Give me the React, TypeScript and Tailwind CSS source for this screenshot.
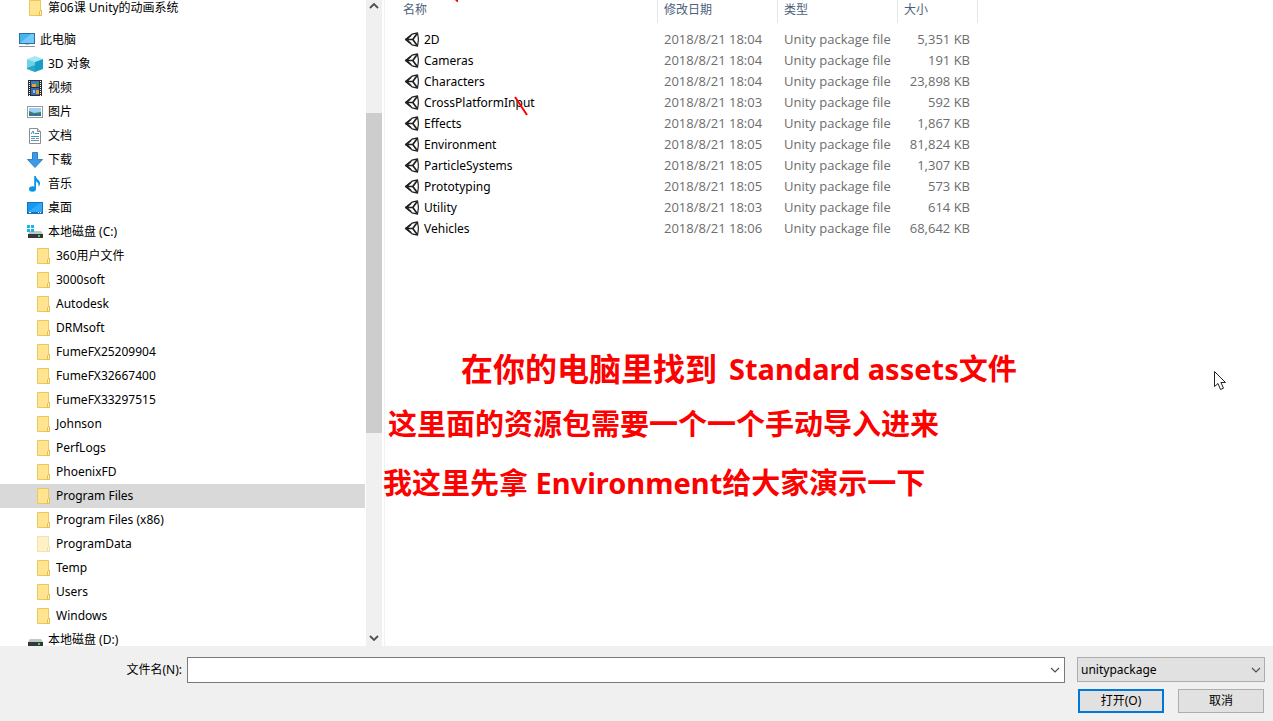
import React from "react";

type IconName = "folder" | "faded" | "pc" | "cube" | "video" | "image" | "doc" | "down" | "music" | "desktop" | "driveC" | "drive";
type Item = { label: string; icon: IconName; level: 0 | 1 | 2; selected?: boolean };

const items: Item[] = [
  { label: "此电脑", icon: "pc", level: 0 },
  { label: "3D 对象", icon: "cube", level: 1 },
  { label: "视频", icon: "video", level: 1 },
  { label: "图片", icon: "image", level: 1 },
  { label: "文档", icon: "doc", level: 1 },
  { label: "下载", icon: "down", level: 1 },
  { label: "音乐", icon: "music", level: 1 },
  { label: "桌面", icon: "desktop", level: 1 },
  { label: "本地磁盘 (C:)", icon: "driveC", level: 1 },
  { label: "360用户文件", icon: "folder", level: 2 },
  { label: "3000soft", icon: "folder", level: 2 },
  { label: "Autodesk", icon: "folder", level: 2 },
  { label: "DRMsoft", icon: "folder", level: 2 },
  { label: "FumeFX25209904", icon: "folder", level: 2 },
  { label: "FumeFX32667400", icon: "folder", level: 2 },
  { label: "FumeFX33297515", icon: "folder", level: 2 },
  { label: "Johnson", icon: "folder", level: 2 },
  { label: "PerfLogs", icon: "folder", level: 2 },
  { label: "PhoenixFD", icon: "folder", level: 2 },
  { label: "Program Files", icon: "folder", level: 2, selected: true },
  { label: "Program Files (x86)", icon: "folder", level: 2 },
  { label: "ProgramData", icon: "faded", level: 2 },
  { label: "Temp", icon: "folder", level: 2 },
  { label: "Users", icon: "folder", level: 2 },
  { label: "Windows", icon: "folder", level: 2 },
  { label: "本地磁盘 (D:)", icon: "drive", level: 1 },
];

const files = [
  ["2D", "2018/8/21 18:04", "5,351 KB"],
  ["Cameras", "2018/8/21 18:04", "191 KB"],
  ["Characters", "2018/8/21 18:04", "23,898 KB"],
  ["CrossPlatformInput", "2018/8/21 18:03", "592 KB"],
  ["Effects", "2018/8/21 18:04", "1,867 KB"],
  ["Environment", "2018/8/21 18:05", "81,824 KB"],
  ["ParticleSystems", "2018/8/21 18:05", "1,307 KB"],
  ["Prototyping", "2018/8/21 18:05", "573 KB"],
  ["Utility", "2018/8/21 18:03", "614 KB"],
  ["Vehicles", "2018/8/21 18:06", "68,642 KB"],
];

const indents = ["pl-[19px]", "pl-[27px]", "pl-[35px]"];

function Drive() {
  return (
    <>
      <path d="M3 7h11l2 3H1z" fill="#c3c6c8" />
      <rect x="1" y="10" width="15" height="4" fill="#35383a" />
      <rect x="11" y="11" width="2" height="2" fill="#35e04a" />
    </>
  );
}

function TreeIcon({ name }: { name: IconName }) {
  return (
    <svg viewBox="0 0 16 16" className="size-4 shrink-0" aria-hidden="true">
      {(name === "folder" || name === "faded") && (
        <g opacity={name === "faded" ? 0.5 : 1}>
          <path d="M2.5.5h11v10h1v5h-12z" fill="#ffe590" stroke="#edc75a" />
          <path d="M12.5 15.5v-4l1-1h1v5z" fill="#fff0b5" stroke="#e6bd48" />
        </g>
      )}
      {name === "pc" && (
        <>
          <rect x=".5" y="1.5" width="15" height="10" fill="#45b4f4" stroke="#2d6f9f" />
          <path d="M1 11 12 2h3v9z" fill="#73cafa" />
          <path d="M6 12h4v1H6z" fill="#b8c7d0" />
          <path d="M0 14.5h16" stroke="#8496a3" />
        </>
      )}
      {name === "cube" && (
        <>
          <path d="M8 0 16 3 8 6 0 3z" fill="#a8e8f2" />
          <path d="M0 3 8 6v10l-8-3z" fill="#6ad3e6" />
          <path d="M16 3 8 6v10l8-3z" fill="#159fc4" />
          <path d="M0 12 8 9v7l-8-3z" fill="#1593b6" opacity=".7" />
        </>
      )}
      {name === "video" && (
        <>
          <rect x="1" width="14" height="16" fill="#2c2e31" />
          <path d="M2.5 1v15M13.5 1v15" stroke="#fff" strokeDasharray="1 1" />
          <rect x="4" y="1" width="8" height="6" fill="#3b78c7" />
          <rect x="4" y="8" width="8" height="7" fill="#3268b4" />
          <path d="M5 4h4v3H5zM9 10h3v4H9z" fill="#e0a536" />
          <path d="M9 3h3v3H9z" fill="#43904a" />
          <path d="M6 10h2v3H6z" fill="#a9bce0" />
        </>
      )}
      {name === "image" && (
        <>
          <rect x=".5" y="2.5" width="15" height="11" fill="#fff" stroke="#96989a" />
          <rect x="2" y="4" width="12" height="8" fill="#9dd2f5" />
          <path d="m2 7 5 2 7-1v4H2z" fill="#427f69" />
          <path d="M2 10h12v2H2z" fill="#3372a2" />
        </>
      )}
      {name === "doc" && (
        <>
          <path d="M2.5.5h8l3 3v12h-11z" fill="#fff" stroke="#8b8d8f" />
          <path d="M10.5.5v3h3" fill="#ddd" stroke="#8b8d8f" />
          <path d="m4 6 2-3 1 3M8 5.5h4M4 8.5h8" fill="none" stroke="#3892c7" />
          <path d="M4 10.5h4M4 12.5h8M9 10.5h3" stroke="#78909e" />
        </>
      )}
      {name === "down" && <path d="M5.5.5h5v7h5L8 15.5.5 7.5h5z" fill="#3f98e5" stroke="#2b82cd" />}
      {name === "music" && (
        <>
          <ellipse cx="5.5" cy="13" rx="3.5" ry="2.7" fill="#0996e7" />
          <path d="M7.2 0h1.6c.2 3 4.7 4.4 4.2 7.8-.1 1.3-.8 2.2-1.5 3 .5-3-.7-4.5-2.5-5.3V13H7.2z" fill="#0996e7" />
        </>
      )}
      {name === "desktop" && (
        <>
          <rect x=".5" y="2.5" width="15" height="11" fill="#1599f3" stroke="#1474b7" />
          <path d="M1 12 13 3h2v9z" fill="#34a9fa" />
          <path d="M1 12.5h14" stroke="#1472b6" />
          <path d="M2 12.5h2M11 12.5h1m1 0h1" stroke="#fff" />
        </>
      )}
      {name === "driveC" && (
        <>
          <Drive />
          <path d="M0 1h3v3H0zM4 1h3v3H4zM0 5h3v3H0zM4 5h3v3H4z" fill="#16b5ed" />
        </>
      )}
      {name === "drive" && <Drive />}
    </svg>
  );
}

function UnityIcon() {
  return (
    <svg viewBox="0 0 16 16" className="size-4 shrink-0" fill="none" stroke="#202020" aria-hidden="true">
      <path d="M1.5 7.5 8 2.2l5.5-1.4.8 5.2v3l-.8 5.2L8 12.8z" strokeWidth="1.2" strokeLinejoin="round" />
      <path d="M1.5 7.5h7.3M8.8 7.5l4.4-6M8.8 7.5l4.4 6" strokeWidth="1.7" />
      <path d="M1 7.5 6.5 3l1.2.8-3 2.7v2l3 2.7-1.2.8z" fill="#202020" stroke="none" />
    </svg>
  );
}

function Chevron({ up = false, bold = false }: { up?: boolean; bold?: boolean }) {
  return (
    <svg viewBox="0 0 10 6" className="h-[6px] w-[10px]" fill="none" stroke="#505050" strokeWidth={bold ? 1.8 : 1.2} aria-hidden="true">
      <path d={up ? "m1 5 4-4 4 4" : "m1 1 4 4 4-4"} />
    </svg>
  );
}

function TreeRow({ item }: { item: Item }) {
  return (
    <li>
      <button
        type="button"
        className={`flex h-6 w-full items-center gap-[5px] whitespace-nowrap text-left ${indents[item.level]} ${item.selected ? "bg-[#d9d9d9]" : ""}`}
      >
        <TreeIcon name={item.icon} />
        {item.label}
      </button>
    </li>
  );
}

export default function App() {
  return (
    <div className="relative flex h-screen flex-col overflow-hidden bg-white font-['Noto_Sans','Noto_Sans_CJK_SC',sans-serif] text-xs text-black">
      <main className="flex min-h-0 flex-1">
        <nav aria-label="文件夹" className="w-[365px] shrink-0 overflow-hidden">
          <ul className="-mt-1">
            <TreeRow item={{ label: "第06课 Unity的动画系统", icon: "folder", level: 1 }} />
          </ul>
          <ul className="mt-2">
            {items.map((item) => (
              <TreeRow key={item.label} item={item} />
            ))}
          </ul>
        </nav>
        <div className="ml-px flex w-4 shrink-0 flex-col bg-[#f0f0f0]">
          <button type="button" aria-label="向上滚动" className="flex h-[11px] items-center justify-center">
            <Chevron up bold />
          </button>
          <div className="flex flex-1 flex-col">
            <div className="flex-[102]" />
            <div className="flex-[320] bg-[#cdcdcd]" />
            <div className="flex-[196]" />
          </div>
          <button type="button" aria-label="向下滚动" className="flex h-[17px] items-center justify-center">
            <Chevron bold />
          </button>
        </div>
        <section aria-label="文件" className="ml-[2px] min-w-0 flex-1 border-l border-[#f2f2f2]">
          <table className="w-[593px] table-fixed border-separate border-spacing-0">
            <colgroup>
              <col className="w-[273px]" />
              <col className="w-[120px]" />
              <col className="w-[120px]" />
              <col className="w-[80px]" />
            </colgroup>
            <thead>
              <tr className="h-[23px] text-left text-[#4c607a]">
                <th className="border-r border-[#e5e5e5] p-0 pb-1 pl-[18px] font-normal">名称</th>
                <th className="border-r border-[#e5e5e5] p-0 pb-1 pl-[6px] font-normal">修改日期</th>
                <th className="border-r border-[#e5e5e5] p-0 pb-1 pl-[6px] font-normal">类型</th>
                <th className="border-r border-[#e5e5e5] p-0 pb-1 pl-[6px] font-normal">大小</th>
              </tr>
            </thead>
            <tbody className="whitespace-nowrap font-['Open_Sans',sans-serif] text-[13px] leading-[21px] text-[#6d6d6d] before:block before:h-[6px]">
              {files.map(([name, date, size]) => (
                <tr key={name}>
                  <td className="p-0 pl-[19px] font-['Noto_Sans',sans-serif] text-xs text-black">
                    <div className="flex h-[21px] items-center gap-1">
                      <UnityIcon />
                      {name}
                    </div>
                  </td>
                  <td className="p-0 pl-[6px]">{date}</td>
                  <td className="p-0 pl-[6px]">Unity package file</td>
                  <td className="p-0 pr-2 text-right">{size}</td>
                </tr>
              ))}
            </tbody>
          </table>
        </section>
      </main>

      <footer className="flex h-[75px] shrink-0 flex-col gap-[6px] bg-[#f0f0f0] pr-2 pt-[11px]">
        <div className="flex items-start">
          <label htmlFor="filename" className="w-[187px] pr-[5px] text-right leading-[26px]">文件名(N):</label>
          <div className="flex h-[26px] flex-1 border border-[#7a7a7a] bg-white">
            <input id="filename" type="text" className="min-w-0 flex-1 px-1 outline-none" />
            <button type="button" aria-label="显示历史记录" className="flex w-[18px] items-center justify-center">
              <Chevron />
            </button>
          </div>
          <div className="relative ml-3 w-[188px]">
            <select aria-label="文件类型" className="h-[25px] w-full appearance-none border border-[#adadad] bg-[#e1e1e1] pl-[3px] text-xs outline-none">
              <option>unitypackage</option>
            </select>
            <span className="pointer-events-none absolute inset-y-0 right-1 flex items-center">
              <Chevron />
            </span>
          </div>
        </div>
        <div className="flex justify-end gap-[14px] pr-px">
          <button type="button" className="h-6 w-[86px] border-2 border-[#0078d7] bg-[#e1e1e1]">打开(O)</button>
          <button type="button" className="h-6 w-[86px] border border-[#adadad] bg-[#e1e1e1]">取消</button>
        </div>
      </footer>

      <div className="pointer-events-none absolute left-[461px] top-[346px] flex items-center gap-3 whitespace-nowrap text-[29px] font-bold leading-[46px] text-[#fd0000]">
        <span className="text-[32px]">在你的电脑里找到</span>
        <span>Standard assets文件</span>
      </div>
      <div className="pointer-events-none absolute left-[388px] top-[401px] whitespace-nowrap text-[29px] font-bold leading-[46px] text-[#fd0000]">这里面的资源包需要一个一个手动导入进来</div>
      <div className="pointer-events-none absolute left-[383px] top-[460px] whitespace-nowrap text-[29px] font-bold leading-[46px] text-[#fd0000]">我这里先拿 Environment给大家演示一下</div>
      <svg viewBox="0 0 14 20" className="pointer-events-none absolute left-[514px] top-[96px] h-5 w-[14px]" aria-hidden="true">
        <path d="m1 1 12 18" stroke="#fd0000" strokeWidth="2" />
      </svg>
      <svg viewBox="0 0 4 2" className="pointer-events-none absolute left-[455px] top-0 h-[2px] w-1" aria-hidden="true">
        <path d="M0 0h3v2H2z" fill="#fd0000" />
      </svg>
      <svg viewBox="0 0 14 21" className="pointer-events-none absolute left-[1213px] top-[370px] h-[21px] w-[14px]" aria-hidden="true">
        <path d="M1.5 1.5v15l3.5-3 2.5 6 3-1.3-2.6-5.7h4.6z" fill="#fff" stroke="#20202c" />
      </svg>
    </div>
  );
}
